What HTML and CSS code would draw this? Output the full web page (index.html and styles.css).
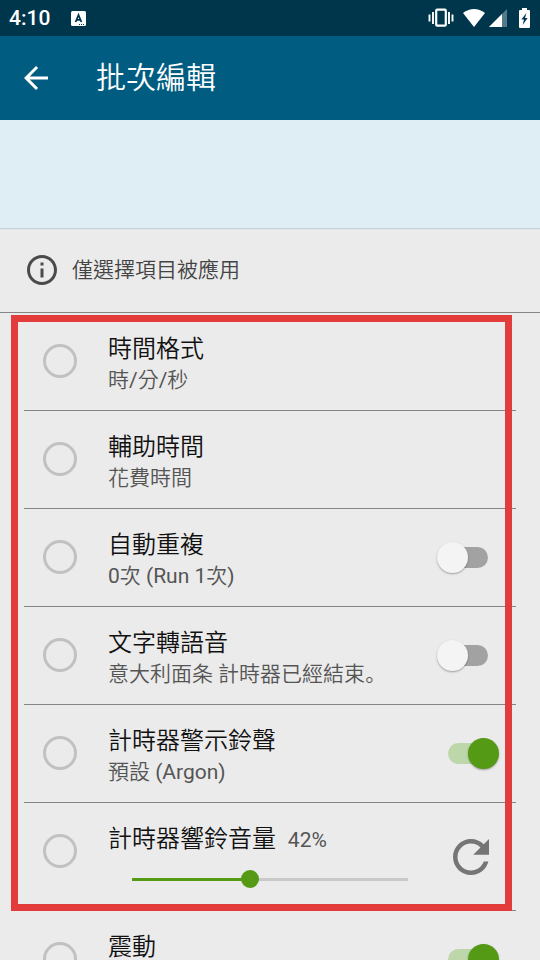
FILE: index.html
```html
<!DOCTYPE html>
<html lang="zh-Hant">
<head>
<meta charset="utf-8">
<meta name="viewport" content="width=device-width, initial-scale=1">
<title>批次編輯</title>
<link rel="stylesheet" href="styles.css">
</head>
<body>
<div class="status">
  <span class="clock">4:10</span>
  <svg class="ime" viewBox="0 0 15 15" aria-hidden="true"><rect width="15" height="15" rx="1.5" fill="#fff"/><path d="M4.6 11 7.5 4 10.4 11M5.6 8.9h3.8" fill="none" stroke="#00364c" stroke-width="1.8"/><path d="M8 13.5h1m1 0h1m1 0h1" stroke="#00364c"/></svg>
  <svg class="vibrate" viewBox="0 0 26 20" aria-hidden="true"><rect x="8.2" y="1.7" width="9.6" height="16" rx="1" fill="none" stroke="#fff" stroke-width="2.2"/><path d="M5 4v12M1.5 6.5v7M21 4v12M24.5 6.5v7" stroke="#fff" stroke-width="1.9"/></svg>
  <svg class="wifi" viewBox="0 0 22 18" aria-hidden="true"><path d="M0 4Q11-4 22 4L11 18Z" fill="#fff"/></svg>
  <svg class="signal" viewBox="0 0 18 18" aria-hidden="true"><path d="M0 18 18 0v18Z" fill="#54798a"/><path d="M0 18 13 5v13Z" fill="#fff"/></svg>
  <svg class="battery" viewBox="0 0 11 20" aria-hidden="true"><path d="M3 0h5v2h2q1 0 1 1v16q0 1-1 1H1q-1 0-1-1V3q0-1 1-1h2Z" fill="#fff"/><path d="M7.4 5 2.4 11.5h2.6L3.6 17l5-7H6Z" fill="#00364c"/></svg>
</div>
<header class="appbar">
  <button class="back" type="button" aria-label="返回"><svg viewBox="0 0 24 24"><path d="M20 11H7.83l5.59-5.59L12 4l-8 8 8 8 1.41-1.41L7.83 13H20v-2z"/></svg></button>
  <h1>批次編輯</h1>
</header>
<div class="banner"></div>
<main>
  <div class="info">
    <svg viewBox="0 0 24 24" aria-hidden="true"><path d="M11 7h2v2h-2zm0 4h2v6h-2zm1-9C6.48 2 2 6.48 2 12s4.48 10 10 10 10-4.48 10-10S17.52 2 12 2zm0 18c-4.41 0-8-3.59-8-8s3.59-8 8-8 8 3.59 8 8-3.59 8-8 8z"/></svg>
    <p>僅選擇項目被應用</p>
  </div>
  <div class="marked">
    <div class="row">
      <input class="pick" type="checkbox" id="format">
      <label class="text" for="format"><span class="name">時間格式</span><span class="detail">時<b>/</b>分<b>/</b>秒</span></label>
    </div>
    <div class="row">
      <input class="pick" type="checkbox" id="aux">
      <label class="text" for="aux"><span class="name">輔助時間</span><span class="detail">花費時間</span></label>
    </div>
    <div class="row">
      <input class="pick" type="checkbox" id="repeat">
      <label class="text" for="repeat"><span class="name">自動重複</span><span class="detail"><b>0</b>次 <b>(Run 1</b>次<b>)</b></span></label>
      <input class="switch" type="checkbox" role="switch" aria-label="自動重複">
    </div>
    <div class="row">
      <input class="pick" type="checkbox" id="speech">
      <label class="text" for="speech"><span class="name">文字轉語音</span><span class="detail">意大利面条 計時器已經結束<span class="stop" lang="zh-Hans">。</span></span></label>
      <input class="switch" type="checkbox" role="switch" aria-label="文字轉語音">
    </div>
    <div class="row">
      <input class="pick" type="checkbox" id="ringtone">
      <label class="text" for="ringtone"><span class="name">計時器警示鈴聲</span><span class="detail">預設 <b>(Argon)</b></span></label>
      <input class="switch" type="checkbox" role="switch" aria-label="計時器警示鈴聲" checked>
    </div>
    <div class="row volume">
      <input class="pick" type="checkbox" id="volume">
      <div class="text">
        <label class="name" for="volume">計時器響鈴音量 <span class="percent">42%</span></label>
        <input class="slider" type="range" min="0" max="7" value="3" aria-label="計時器響鈴音量">
      </div>
      <button class="reset" type="button" aria-label="重設"><svg viewBox="0 0 24 24"><path d="M17.65 6.35C16.2 4.9 14.21 4 12 4c-4.42 0-7.99 3.58-7.99 8s3.57 8 7.99 8c3.73 0 6.84-2.55 7.73-6h-2.08c-.82 2.33-3.04 4-5.65 4-3.31 0-6-2.69-6-6s2.69-6 6-6c1.66 0 3.14.69 4.22 1.78L13 11h7V4l-2.35 2.35z"/></svg></button>
    </div>
  </div>
  <div class="row">
    <input class="pick" type="checkbox" id="shake">
    <label class="text" for="shake"><span class="name">震動</span></label>
    <input class="switch" type="checkbox" role="switch" aria-label="震動" checked>
  </div>
</main>
</body>
</html>
```
FILE: styles.css
```css
* { box-sizing: border-box; }
body {
  margin: 0;
  height: 100vh;
  overflow: hidden;
  background: #ebebeb;
  color: #111;
  font-family: Roboto, "Noto Sans CJK JP", sans-serif;
  font-weight: 350;
}
h1, p { margin: 0; font-weight: inherit; }
b { font-weight: 400; }
button { border: 0; padding: 0; background: none; }
svg { display: block; flex: none; }
input { margin: 0; appearance: none; }

.status {
  display: flex;
  align-items: center;
  height: 36px;
  padding: 0 10px 0 9px;
  background: #00364c;
  color: #fff;
}
.clock { font-size: 21px; font-weight: 500; }
.ime { width: 15px; height: 15px; margin-left: 21px; }
.vibrate { width: 26px; height: 20px; margin-left: auto; }
.wifi { width: 22px; height: 18px; margin-left: 9px; }
.signal { width: 18px; height: 18px; margin-left: 4px; }
.battery { width: 11px; height: 20px; margin-left: 12px; }

.appbar {
  display: flex;
  align-items: center;
  gap: 42px;
  height: 84px;
  padding: 0 18px;
  background: #005c80;
  color: #fff;
}
.back svg { width: 36px; height: 36px; fill: #fff; }
.appbar h1 { font-size: 30px; line-height: 40px; }

.banner {
  height: 108px;
  background: #dfedf5;
  box-shadow: 0 1px 1px #c4ced3;
}

.info {
  display: flex;
  align-items: center;
  gap: 12px;
  height: 85px;
  padding: 0 24px;
  border-bottom: 1px solid #858585;
  color: #444;
  font-size: 21px;
  line-height: 28px;
}
.info svg { width: 36px; height: 36px; fill: #4a4a4a; }

.marked { position: relative; }
.marked::after {
  content: "";
  position: absolute;
  inset: 2px 28px 0 11px;
  border: 7px solid #e33c3c;
  pointer-events: none;
}

.row {
  display: flex;
  align-items: center;
  min-height: 98px;
  margin: 0 24px;
  border-bottom: 1px solid #858585;
}
.pick {
  flex: none;
  align-self: flex-start;
  width: 34px;
  height: 34px;
  margin: 31px 31px 0 19px;
  border: 3px solid #c1c1c1;
  border-radius: 50%;
}
.text {
  flex: 1;
  align-self: flex-start;
  display: flex;
  flex-direction: column;
  padding: 19px 0 16px;
}
.name { font-size: 24px; line-height: 34px; }
.detail, .percent { color: #555; font-size: 21px; line-height: 28px; }
.percent { margin-left: 6px; font-weight: 400; }
.stop { font-family: "Noto Sans CJK SC", sans-serif; line-height: 1; }

.switch {
  display: grid;
  align-items: center;
  flex: none;
  width: 62px;
  height: 31px;
  margin-right: 17px;
}
.switch::before, .switch::after { content: ""; grid-area: 1 / 1; }
.switch::before {
  height: 21px;
  margin: 0 11px;
  border-radius: 11px;
  background: #a2a2a2;
}
.switch::after {
  width: 31px;
  height: 31px;
  border-radius: 50%;
  background: #f4f4f4;
  box-shadow: 0 1px 2px #0005;
}
.switch:checked::before { background: #bdd6aa; }
.switch:checked::after { justify-self: end; background: #549a15; }

.volume .text { padding-bottom: 22px; }
.slider {
  height: 18px;
  margin: 14px 27px 0 15px;
  background: linear-gradient(90deg, #549a15 43%, #c9c9c9 43%) center / calc(100% - 18px) 3px no-repeat;
}
.slider::-webkit-slider-thumb {
  appearance: none;
  width: 18px;
  height: 18px;
  border-radius: 50%;
  background: #549a15;
}
.reset { margin-right: 18px; }
.reset svg { width: 54px; height: 54px; fill: #757575; }
```
